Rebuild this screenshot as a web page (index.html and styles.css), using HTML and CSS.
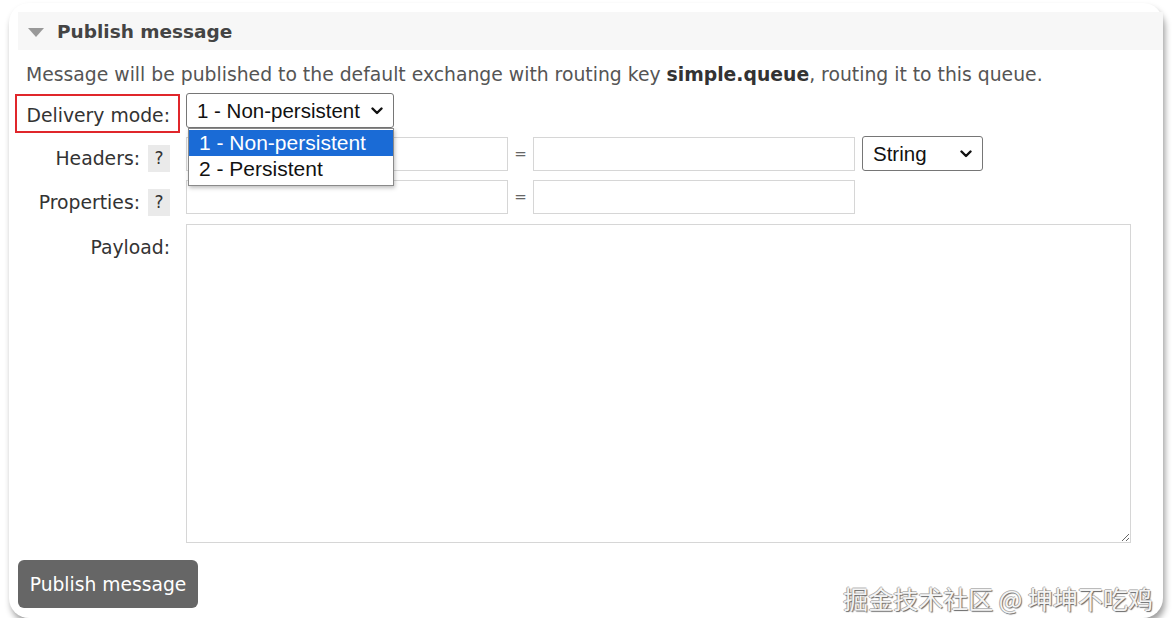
FILE: index.html
```html
<!DOCTYPE html>
<html lang="en">
<head>
    <meta charset="UTF-8">
    <meta name="viewport" content="width=device-width, initial-scale=1.0">
    <title>Publish message</title>
    <link rel="stylesheet" href="styles.css">
</head>
<body>

<div class="card">
    <div class="section-head">
        <span class="arrow"></span>
        <h2>Publish message</h2>
    </div>

    <p class="hint">Message will be published to the default exchange with routing key <b>simple.queue</b>, routing it to this queue.</p>

    <div class="row row-mode">
        <div class="label marked">Delivery mode:</div>
        <div class="field">
            <div class="select-wrap">
                <select class="select mode-select">
                    <option>1 - Non-persistent</option>
                    <option>2 - Persistent</option>
                </select>
                <svg class="chevron" width="12" height="8" viewBox="0 0 12 8"><path d="M1.5 1.5 L6 6 L10.5 1.5" fill="none" stroke="#111" stroke-width="2.4" stroke-linecap="round" stroke-linejoin="round"/></svg>
                <ul class="dropdown">
                    <li class="active">1 - Non-persistent</li>
                    <li>2 - Persistent</li>
                </ul>
            </div>
        </div>
    </div>

    <div class="row row-headers">
        <div class="label">Headers: <span class="help">?</span></div>
        <div class="field">
            <input type="text" class="input">
            <span class="eq">=</span>
            <input type="text" class="input">
            <div class="select-wrap type-wrap">
                <select class="select type-select">
                    <option>String</option>
                    <option>Number</option>
                    <option>Boolean</option>
                </select>
                <svg class="chevron" width="12" height="8" viewBox="0 0 12 8"><path d="M1.5 1.5 L6 6 L10.5 1.5" fill="none" stroke="#111" stroke-width="2.4" stroke-linecap="round" stroke-linejoin="round"/></svg>
            </div>
        </div>
    </div>

    <div class="row row-props">
        <div class="label">Properties: <span class="help">?</span></div>
        <div class="field">
            <input type="text" class="input">
            <span class="eq">=</span>
            <input type="text" class="input">
        </div>
    </div>

    <div class="row row-payload">
        <div class="label">Payload:</div>
        <div class="field">
            <textarea class="payload"></textarea>
        </div>
    </div>

    <button class="publish-btn">Publish message</button>

    <div class="watermark">掘金技术社区 @ 坤坤不吃鸡</div>
</div>

</body>
</html>
```

FILE: styles.css
```css
body {
    margin: 0;
    background: #fff;
    font-family: 'DejaVu Sans', Verdana, sans-serif;
    color: #333;
}
.card {
    position: relative;
    width: 1154px;
    height: 615px;
    margin: 3px 0 0 9px;
    padding: 9px 0 0 9px;
    box-sizing: border-box;
    background: #fff;
    border-radius: 20px;
    box-shadow: 2px 5px 6px rgba(0, 0, 0, 0.38);
}
.section-head {
    height: 38px;
    background: #f7f7f7;
    display: flex;
    align-items: center;
    padding-left: 10px;
}
.arrow {
    width: 0;
    height: 0;
    border-left: 8px solid transparent;
    border-right: 8px solid transparent;
    border-top: 9px solid #999;
    margin-top: 2px;
}
.section-head h2 {
    margin: 0 0 0 13px;
    font-size: 18.5px;
    font-weight: bold;
    color: #444;
}
.hint {
    margin: 14px 0 0 8px;
    font-size: 18.8px;
    line-height: 22px;
    color: #555;
}
.hint b {
    color: #333;
}
.row {
    display: flex;
    align-items: flex-start;
}
.row-mode {
    margin-top: 7px;
}
.row-headers {
    margin-top: 8px;
}
.row-props {
    margin-top: 9px;
}
.row-payload {
    margin-top: 10px;
}
.label {
    width: 152px;
    height: 34px;
    box-sizing: border-box;
    flex: none;
    font-size: 18.8px;
    line-height: 22px;
    padding-top: 12px;
    color: #333;
    position: relative;
    display: flex;
    justify-content: flex-end;
    align-items: flex-start;
    white-space: nowrap;
}
.row-payload .label {
    padding-top: 13px;
}
.marked::after {
    content: '';
    position: absolute;
    left: -3px;
    right: -10px;
    top: 1px;
    height: 35px;
    border: 2px solid #e0262b;
}
.help {
    display: inline-block;
    width: 22px;
    height: 27px;
    line-height: 27px;
    margin: -3px 0 0 8px;
    background: #eaeaea;
    text-align: center;
    font-size: 17px;
}
.field {
    margin-left: 16px;
    display: flex;
    align-items: center;
}
.input {
    width: 322px;
    height: 34px;
    box-sizing: border-box;
    border: 1px solid #d6d6d6;
    background: #fff;
    margin: 0;
}
.eq {
    width: 25px;
    text-align: center;
    font-size: 15px;
    color: #666;
}
.select {
    appearance: none;
    -webkit-appearance: none;
    font-family: 'Liberation Sans', Arial, sans-serif;
    font-size: 20.5px;
    height: 35px;
    border: 1px solid #767676;
    border-radius: 3px;
    background: #fff;
    color: #111;
    padding: 0 0 0 10px;
    margin: 0;
}
.mode-select {
    width: 208px;
}
.type-select {
    width: 121px;
}
.select-wrap {
    position: relative;
}
.type-wrap {
    margin-left: 7px;
}
.chevron {
    position: absolute;
    right: 11px;
    top: 14px;
    pointer-events: none;
}
.dropdown {
    position: absolute;
    left: 2px;
    top: 35px;
    width: 206px;
    margin: 0;
    padding: 1px 0 3px;
    list-style: none;
    box-sizing: border-box;
    background: #fff;
    border: 1px solid #8a8a8a;
    box-shadow: 1px 2px 4px rgba(0, 0, 0, 0.25);
    font-family: 'Liberation Sans', Arial, sans-serif;
    font-size: 21px;
    z-index: 2;
}
.dropdown li {
    height: 26px;
    line-height: 26px;
    padding-left: 10px;
    color: #111;
}
.dropdown li.active {
    background: #1a6bd6;
    color: #fff;
}
.payload {
    width: 945px;
    height: 319px;
    box-sizing: border-box;
    border: 1px solid #d6d6d6;
    margin: 0;
    resize: both;
}
.publish-btn {
    display: block;
    margin-top: 17px;
    width: 180px;
    height: 48px;
    background: #666;
    color: #fff;
    border: none;
    border-radius: 6px;
    font-family: 'DejaVu Sans', Verdana, sans-serif;
    font-size: 18.7px;
    cursor: pointer;
}
.watermark {
    position: absolute;
    right: 10px;
    bottom: 2px;
    font-family: 'Noto Sans CJK SC', sans-serif;
    font-size: 25px;
    color: #f4f4f4;
    text-shadow: 1px 1px 1px #666, -1px 0 0 #aaa, 0 -1px 0 #bbb;
}
```
